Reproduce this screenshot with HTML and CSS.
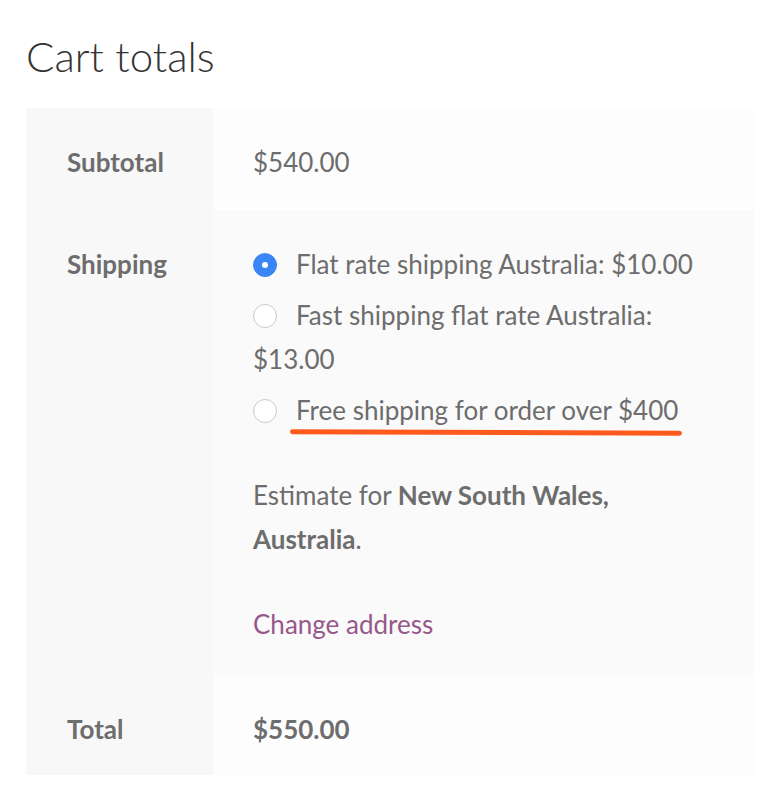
FILE: index.html
```html
<!DOCTYPE html>
<html>
<head>
<meta charset="utf-8">
<link rel="stylesheet" href="styles.css">
</head>
<body>
<div class="cart">
  <h2 class="title">Cart totals</h2>
  <table class="totals">
    <tr class="row-sub">
      <th>Subtotal</th>
      <td>$540.00</td>
    </tr>
    <tr class="row-ship">
      <th>Shipping</th>
      <td>
        <ul class="methods">
          <li><span class="radio checked"></span><span class="label">Flat rate shipping Australia: $10.00</span></li>
          <li><span class="radio"></span><span class="label">Fast shipping flat rate Australia: $13.00</span></li>
          <li><span class="radio"></span><span class="label marked">Free shipping for order over $400<span class="scribble"></span></span></li>
        </ul>
        <p class="estimate">Estimate for <strong>New South Wales,</strong><br><strong>Australia</strong>.</p>
        <a class="change" href="#">Change address</a>
      </td>
    </tr>
    <tr class="row-total">
      <th>Total</th>
      <td><strong>$550.00</strong></td>
    </tr>
  </table>
</div>
</body>
</html>
```
FILE: styles.css
```css
* { box-sizing: border-box; }
html, body { margin: 0; padding: 0; background: #fff; }
body {
  font-family: "Lato", "Open Sans", sans-serif;
  color: #6d6d6d;
  font-size: 26px;
  line-height: 44px;
}
.cart { padding: 28px 14px 0 26px; }
.title {
  margin: 0 0 24px 0;
  font-size: 42px;
  line-height: 56px;
  font-weight: 300;
  color: #333;
}
.totals {
  width: 728px;
  border-collapse: collapse;
}
.totals th {
  width: 187px;
  background: #f8f8f8;
  text-align: left;
  vertical-align: top;
  font-weight: 700;
  padding: 32px 20px 26px 41px;
}
.totals td {
  vertical-align: top;
  padding: 32px 46px 26px 40px;
  background: #fdfdfd;
}
.row-ship td { background: #fafafa; padding-bottom: 29px; }
.row-total th, .row-total td { padding-bottom: 24px; }
.methods { list-style: none; margin: 0; padding: 0; }
.methods li { margin: 0 0 7px 0; }
.radio {
  display: inline-block;
  width: 24px;
  height: 24px;
  border-radius: 50%;
  border: 1px solid #c9c9c9;
  background: #fff;
  vertical-align: -3px;
  margin-right: 19px;
  position: relative;
}
.radio.checked {
  background: #3b86f7;
  border-color: #3b86f7;
}
.radio.checked::after {
  content: "";
  position: absolute;
  left: 8px; top: 8px;
  width: 6px; height: 6px;
  border-radius: 50%;
  background: #fff;
}
.label.marked { position: relative; }
.scribble {
  position: absolute;
  left: -6px;
  right: -4px;
  bottom: -9px;
  height: 5px;
  border-radius: 3px;
  background: #ff5a1e;
  transform: rotate(0.2deg);
}
.estimate { margin: 41px 0 0 0; }
.estimate strong { font-weight: 700; }
.change { display: block; margin-top: 41px; color: #96588a; text-decoration: none; }
.row-total strong { font-weight: 700; }
```
